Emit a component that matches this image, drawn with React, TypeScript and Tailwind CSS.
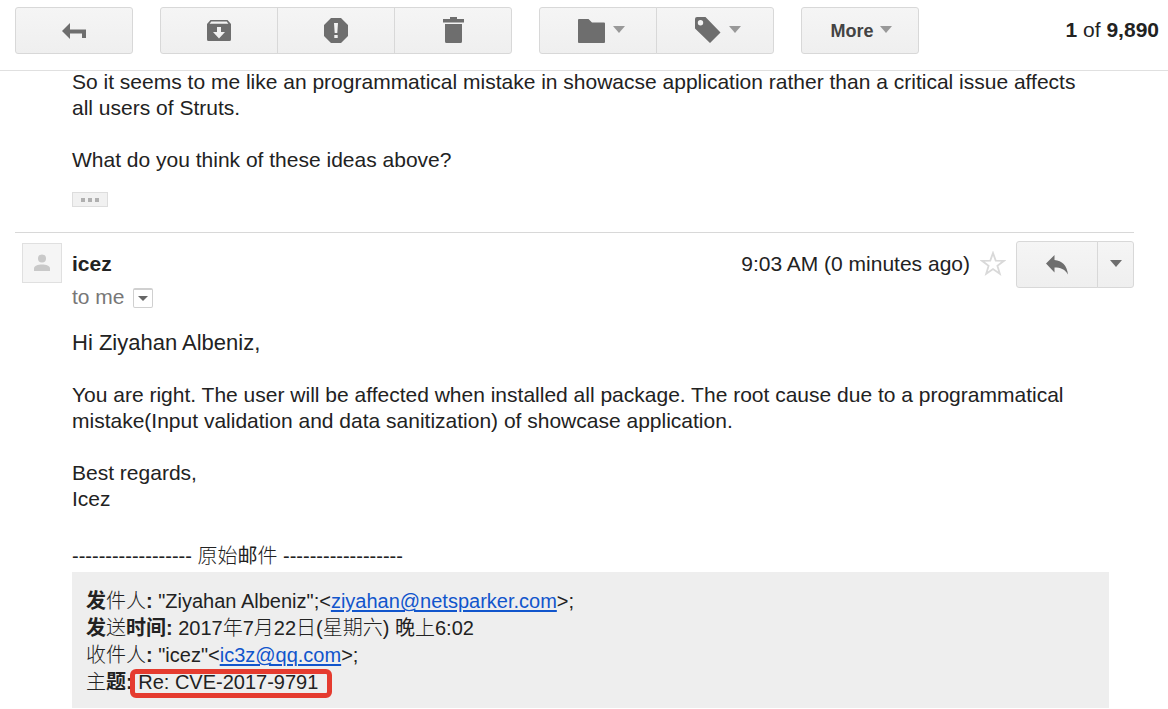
import type { ReactNode } from "react";
import clsx from "clsx";

type ToolButtonProps = {
  label: string;
  className?: string;
  children: ReactNode;
};

function ToolButton({ label, className, children }: ToolButtonProps) {
  return (
    <button
      type="button"
      aria-label={label}
      className={clsx(
        "-ml-px flex h-[47px] items-center justify-center border border-[#d8d8d8] bg-linear-to-b from-[#f5f5f5] to-[#efefef] text-[#6e6e6e] first:ml-0 first:rounded-l-[3px] last:rounded-r-[3px] hover:border-[#c0c0c0]",
        className ?? "w-[118px]"
      )}
    >
      {children}
    </button>
  );
}

function Caret({ className }: { className?: string }) {
  return (
    <svg width="12" height="9" viewBox="0 0 12 9" className={className} fill="currentColor">
      <path d="M0 0h12L6 7z" />
    </svg>
  );
}

function BackIcon() {
  return (
    <svg width="24" height="16" viewBox="0 0 24 16" fill="currentColor">
      <path d="M0 8l8-8v6.500h16V15h-4v-4.500H8V16z" />
    </svg>
  );
}

function ArchiveIcon() {
  return (
    <svg width="24" height="22" viewBox="0 0 24 22" fill="currentColor">
      <path
        fillRule="evenodd"
        d="M3.500 0h17L24 4v15.500a1.500 1.500 0 0 1-1.500 1.500h-21A1.500 1.500 0 0 1 0 19.500V4zM4.300 1.600L2.600 3.800h18.800l-1.700-2.200zM10 7v5H6l6 6.500 6-6.500h-4V7z"
      />
    </svg>
  );
}

function SpamIcon() {
  return (
    <svg width="24" height="25" viewBox="0 0 24 25" fill="currentColor">
      <path
        fillRule="evenodd"
        d="M7 0h10l7 7v11l-7 7H7l-7-7V7zM10 5l.7 10h2.600L14 5zM10.300 17v3h3.400v-3z"
      />
    </svg>
  );
}

function TrashIcon() {
  return (
    <svg width="21" height="28" viewBox="0 0 21 28" fill="currentColor">
      <path d="M7 0h7v2h7v3.500H0V2h7zM2 7h17v17.500a1.500 1.500 0 0 1-1.500 1.500h-14A1.500 1.500 0 0 1 2 24.500z" />
    </svg>
  );
}

function FolderIcon() {
  return (
    <svg width="27" height="24" viewBox="0 0 27 24" fill="currentColor">
      <path d="M1 0h9.500L14 3.500h12a1 1 0 0 1 1 1V23a1 1 0 0 1-1 1H1a1 1 0 0 1-1-1V1a1 1 0 0 1 1-1z" />
    </svg>
  );
}

function TagIcon() {
  return (
    <svg width="26" height="28" viewBox="0 0 26 28" fill="currentColor">
      <path
        fillRule="evenodd"
        d="M2 0h8.500L25.500 15.500 15 26 0 11.500V2a2 2 0 0 1 2-2zM5.500 3a2.700 2.700 0 1 0 0 5.400 2.700 2.700 0 0 0 0-5.400z"
      />
    </svg>
  );
}

function ReplyIcon() {
  return (
    <svg width="22" height="20" viewBox="0 0 22 20" fill="currentColor">
      <path d="M0 8.500L8.500 0v5C16 5.500 21 10.500 22 19.500 18.500 14 14.500 12.500 8.500 12.500v5z" />
    </svg>
  );
}

function StarIcon() {
  return (
    <svg width="26" height="28" viewBox="0 0 26 28" fill="none" stroke="#d9d9d9" strokeWidth="1.8">
      <path d="M13 2l2.700 7.600 8.300.2-6.600 5 2.400 7.900-6.800-4.700-6.800 4.700 2.400-7.900-6.600-5 8.300-.2z" />
    </svg>
  );
}

function PersonIcon() {
  return (
    <svg width="16" height="18" viewBox="0 0 16 18" fill="#c9c9c9">
      <circle cx="8" cy="4.500" r="4" />
      <path d="M0 17v-2.500C0 11.800 4 10.500 8 10.500s8 1.300 8 4V17z" />
    </svg>
  );
}

function Toolbar() {
  return (
    <header className="relative z-10 flex h-[71px] items-start justify-between border-b border-[#e0e0e0] bg-white pt-[7px] pr-[9px] pl-[15px]">
      <div className="flex gap-[27px]">
        <div className="flex">
          <ToolButton label="Back to Inbox">
            <BackIcon />
          </ToolButton>
        </div>
        <div className="flex">
          <ToolButton label="Archive">
            <ArchiveIcon />
          </ToolButton>
          <ToolButton label="Report spam">
            <SpamIcon />
          </ToolButton>
          <ToolButton label="Delete">
            <TrashIcon />
          </ToolButton>
        </div>
        <div className="flex">
          <ToolButton label="Move to" className="w-[118px] gap-2 pl-1.5">
            <FolderIcon />
            <Caret className="text-[#999]" />
          </ToolButton>
          <ToolButton label="Labels" className="w-[118px] gap-2 pl-1.5">
            <TagIcon />
            <Caret className="text-[#999]" />
          </ToolButton>
        </div>
        <div className="flex">
          <ToolButton label="More" className="w-[118px] gap-1.5 pl-0.5">
            <span className="text-[18px] font-bold text-[#444]">More</span>
            <Caret className="text-[#999]" />
          </ToolButton>
        </div>
      </div>
      <p className="leading-[45px]">
        <b>1</b> of <b>9,890</b>
      </p>
    </header>
  );
}

function QuotedHeaders() {
  return (
    <div className="mr-[25px] bg-[#eee] px-3.5 pt-4 pb-3 text-[20px] leading-[27px] font-light">
      <p>
        <b className="font-bold">发</b>件人<b className="font-bold">:</b> "Ziyahan Albeniz";&lt;
        <a href="mailto:ziyahan@netsparker.com" className="text-[#15c] underline underline-offset-2">
          ziyahan@netsparker.com
        </a>
        &gt;;
      </p>
      <p>
        <b className="font-bold">发</b>送<b className="font-bold">时间:</b> 2017年7月22日(星期六){" "}
        <span className="font-normal">晚</span>上6:02
      </p>
      <p>
        收件人<b className="font-bold">:</b> "icez"&lt;
        <a href="mailto:ic3z@qq.com" className="text-[#15c] underline underline-offset-2">
          ic3z@qq.com
        </a>
        &gt;;
      </p>
      <p>
        主<b className="font-bold">题:</b>{" "}
        <span className="relative">
          Re: CVE-2017-9791
          <span className="absolute -top-0.5 -right-3.5 -left-2 h-[29px] rounded-md border-[5px] border-[#e53b2f]" />
        </span>
      </p>
    </div>
  );
}

export default function App() {
  return (
    <div className="min-h-screen bg-white font-['Liberation_Sans','Noto_Sans_CJK_SC',sans-serif] text-[21px] leading-[26px] text-[#222]">
      <Toolbar />
      <main className="-mt-0.5 pr-[34px] pl-[15px]">
        <article className="border-b border-[#d8d8d8] pb-[25px] pl-[57px]">
          <p>
            So it seems to me like an programmatical mistake in showacse application rather than a
            critical issue affects
            <br />
            all users of Struts.
          </p>
          <p className="mt-[26px]">What do you think of these ideas above?</p>
          <button
            type="button"
            aria-label="Show trimmed content"
            className="mt-[19px] flex h-[15px] w-9 items-center justify-center gap-[3px] border border-[#ddd] bg-[#f1f1f1]"
          >
            <span className="size-1 bg-[#b0b0b0]" />
            <span className="size-1 bg-[#b0b0b0]" />
            <span className="size-1 bg-[#b0b0b0]" />
          </button>
        </article>

        <article className="pt-2">
          <div className="flex items-start">
            <div className="mt-0.5 mr-2.5 ml-[7px] flex size-10 items-center justify-center border border-[#e0e0e0] bg-[#f5f5f5]">
              <PersonIcon />
            </div>
            <h2 className="leading-[45px] font-bold">icez</h2>
            <div className="ml-auto flex items-start">
              <time className="leading-[45px]">9:03 AM (0 minutes ago)</time>
              <button type="button" aria-label="Star" className="mx-2.5 flex h-[47px] items-center">
                <StarIcon />
              </button>
              <div className="flex">
                <ToolButton label="Reply" className="w-[82px]">
                  <ReplyIcon />
                </ToolButton>
                <ToolButton label="More reply options" className="w-[37px]">
                  <Caret />
                </ToolButton>
              </div>
            </div>
          </div>

          <div className="pl-[57px]">
            <div className="-mt-1 flex items-center gap-2 text-[#777]">
              to me
              <button
                type="button"
                aria-label="Show details"
                className="mt-0.5 flex size-5 items-center justify-center rounded-xs border border-t-2 border-[#d0d0d0] text-[#666]"
              >
                <svg width="10" height="5" viewBox="0 0 10 5" fill="currentColor">
                  <path d="M0 0h10L5 5z" />
                </svg>
              </button>
            </div>
            <p className="mt-5 text-[22px]">Hi Ziyahan Albeniz,</p>
            <p className="mt-[26px]">
              You are right. The user will be affected when installed all package. The root cause
              due to a programmatical
              <br />
              mistake(Input validation and data sanitization) of showcase application.
            </p>
            <p className="mt-[26px]">
              Best regards,
              <br />
              Icez
            </p>
            <p className="mt-7 text-[20px] leading-[32px] font-light">
              ------------------ 原始<span className="font-normal">邮</span>件 ------------------
            </p>
            <QuotedHeaders />
          </div>
        </article>
      </main>
    </div>
  );
}
